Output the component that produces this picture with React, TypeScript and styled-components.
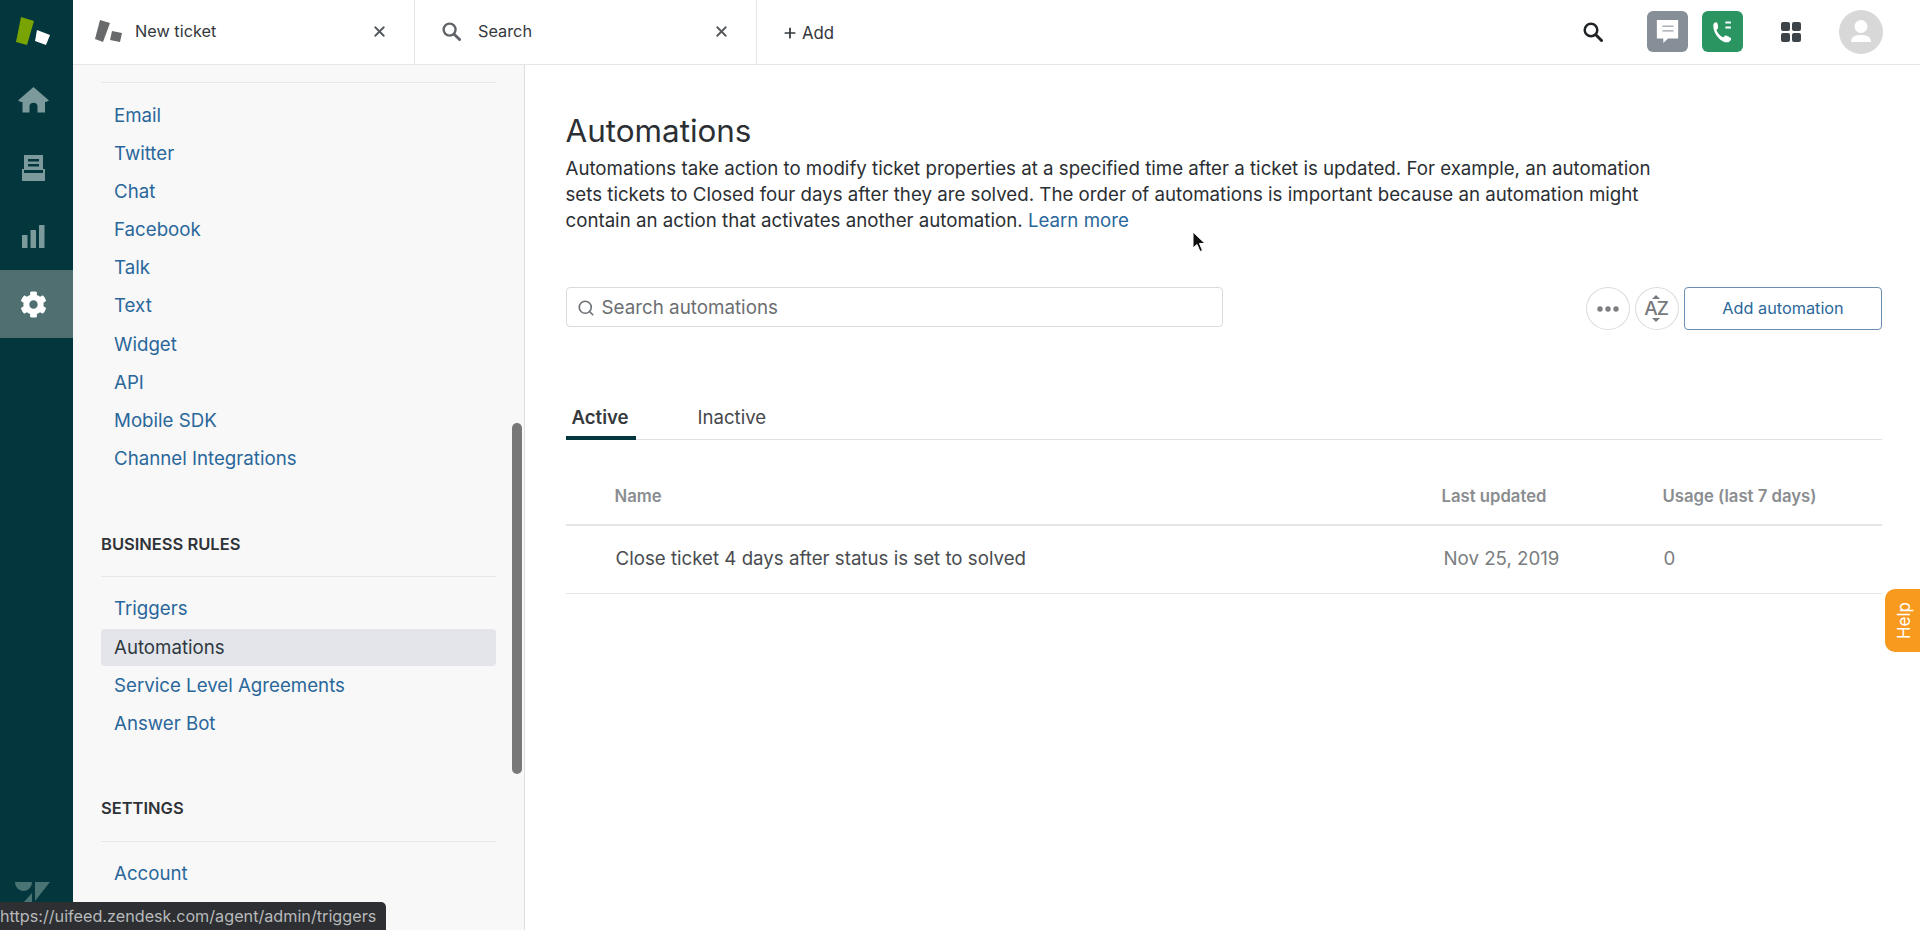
import styled, { createGlobalStyle } from "styled-components";
import { X, Search, Plus } from "lucide-react";
import { FaCog } from "react-icons/fa";

const channels = ["Email", "Twitter", "Chat", "Facebook", "Talk", "Text", "Widget", "API", "Mobile SDK", "Channel Integrations"];
const rules = ["Triggers", "Automations", "Service Level Agreements", "Answer Bot"];

const SearchGlyph = ({ size, color }: { size: number; color: string }) => (
  <svg width={size} height={size} viewBox="0 0 20 20" fill="none" stroke={color}>
    <circle cx="8" cy="8" r="6.300" strokeWidth="2.500" />
    <path d="M12.800 12.800 L18.500 18.500" strokeWidth="3" strokeLinecap="round" />
  </svg>
);

const App = () => (
  <Page>
    <GlobalStyle />
    <Rail>
      <RailLogo>
        <svg width="73" height="65" viewBox="0 0 73 65">
          <polygon points="21,17 34,21 27,45 16,42" fill="#78a300" />
          <polygon points="37,30 50,35 46,45 35,41" fill="#fff" />
        </svg>
      </RailLogo>
      <RailItem>
        <svg width="31" height="26" viewBox="0 0 31 26" fill="#7c9a9c">
          <path d="M15.5 0 L31 13.5 L28 15 L27 15 L27 25.5 L19.5 25.5 L19.5 19 C19.5 14.5 11.5 14.5 11.5 19 L11.5 25.5 L4.5 25.5 L4.5 15 L3 15 L0 13.5 Z" />
        </svg>
      </RailItem>
      <RailItem>
        <svg width="23" height="26" viewBox="0 0 23 26" fill="#7c9a9c">
          <path fillRule="evenodd" d="M2 0 H21 V15 H2 Z M6 4 V6.5 H17 V4 Z M6 9 V11.5 H17 V9 Z" />
          <path d="M0 14 H2 V18 H21 V14 H23 V26 H0 Z" />
        </svg>
      </RailItem>
      <RailItem>
        <svg width="23" height="23" viewBox="0 0 23 23" fill="#7c9a9c">
          <rect x="0" y="10" width="5.5" height="13" rx="0.5" />
          <rect x="8.5" y="5" width="5.5" height="18" rx="0.5" />
          <rect x="17" y="0" width="5.5" height="23" rx="0.5" />
        </svg>
      </RailItem>
      <RailItem $active>
        <FaCog size={27} color="#fff" />
      </RailItem>
      <RailMark>
        <svg width="36" height="30" viewBox="0 0 36 30" fill="#4a7474">
          <path d="M0 0 H17 C17 5 13 9 8.500 9 C4 9 0 5 0 0 Z" />
          <polygon points="17,11 17,30 0,30" />
          <polygon points="20,0 35,0 20,19" />
        </svg>
      </RailMark>
    </Rail>

    <Body>
      <TopBar>
        <Tab>
          <svg width="28" height="22" viewBox="0 0 28 22" fill="#68696b">
            <polygon points="6,0 16,3 9,22 1,19" />
            <polygon points="18,11 28,13 26,22 16,20" />
          </svg>
          <TabTitle>New ticket</TabTitle>
          <X size={17} strokeWidth={2.6} color="#55585c" />
        </Tab>
        <Tab $narrow>
          <SearchGlyph size={19} color="#606468" />
          <TabTitle $wide>Search</TabTitle>
          <X size={17} strokeWidth={2.6} color="#55585c" />
        </Tab>
        <AddTab>
          <Plus size={16} strokeWidth={2.6} />
          Add
        </AddTab>
        <TopActions>
          <SearchGlyph size={20} color="#1f2326" />
          <ChannelButton $color="#868e98">
            <svg width="25" height="25" viewBox="0 0 27 27">
              <path d="M2 1 H25 V21 H14 L9 26 V21 H2 Z" fill="#fff" />
              <rect x="8" y="7" width="12" height="1.6" fill="#a9afb6" />
              <rect x="8" y="12" width="12" height="1.6" fill="#a9afb6" />
            </svg>
          </ChannelButton>
          <ChannelButton $color="#2a9560">
            <svg width="27" height="27" viewBox="0 0 24 24" fill="#fff">
              <path d="M6.6 3.8c1.100.1 1.700 3.900 1.500 5-.1.700-1.500 1.300-1.500 2 1 2.600 3.200 4.900 5.700 6.400.8.200 1.500-1.500 2.300-1.600 1-.2 4.200 1.700 5 2.400.5 1-1.100 3.200-2.400 3.500C10.500 22.900 2.700 12.500 4 5.300c.3-.8 1.700-1.600 2.600-1.500z" />
              <rect x="14.500" y="3" width="5" height="1.900" rx="0.5" />
              <rect x="14.500" y="7.500" width="5" height="1.900" rx="0.5" />
            </svg>
          </ChannelButton>
          <AppsGrid>
            <i /><i /><i /><i />
          </AppsGrid>
          <Avatar>
            <svg width="44" height="44" viewBox="0 0 44 44" fill="#fff">
              <circle cx="22" cy="16.500" r="6.500" />
              <path d="M12 32 C12 26 17 25 22 25 C27 25 32 26 32 32 Z" />
            </svg>
          </Avatar>
        </TopActions>
      </TopBar>

      <Columns>
        <Sidebar>
          <Divider />
          <NavList>
            {channels.map((name) => (
              <NavItem key={name}>{name}</NavItem>
            ))}
          </NavList>
          <SectionTitle>BUSINESS RULES</SectionTitle>
          <Divider />
          <NavList>
            {rules.map((name) => (
              <NavItem key={name} $selected={name === "Automations"}>{name}</NavItem>
            ))}
          </NavList>
          <SectionTitle>SETTINGS</SectionTitle>
          <Divider />
          <NavList>
            <NavItem>Account</NavItem>
          </NavList>
          <ScrollThumb />
        </Sidebar>

        <Main>
          <Title>Automations</Title>
          <Intro>
            Automations take action to modify ticket properties at a specified time after a ticket is updated. For example, an automation sets tickets to Closed four days after they are solved. The order of automations is important because an automation might contain an action that activates another automation. <IntroLink>Learn more</IntroLink>
          </Intro>

          <Toolbar>
            <SearchBox>
              <Search size={18} strokeWidth={2.2} color="#6f7377" />
              <span>Search automations</span>
            </SearchBox>
            <ToolButtons>
              <RoundButton>
                <svg width="22" height="6" viewBox="0 0 22 6" fill="#7d7f82">
                  <circle cx="3" cy="3" r="2.700" />
                  <circle cx="11" cy="3" r="2.700" />
                  <circle cx="19" cy="3" r="2.700" />
                </svg>
              </RoundButton>
              <RoundButton>
                <SortLabel>AZ</SortLabel>
              </RoundButton>
              <AddButton>Add automation</AddButton>
            </ToolButtons>
          </Toolbar>

          <TabRow>
            <ListTab $active>Active</ListTab>
            <ListTab>Inactive</ListTab>
          </TabRow>

          <HeadRow>
            <span>Name</span>
            <span>Last updated</span>
            <span>Usage (last 7 days)</span>
          </HeadRow>
          <DataRow>
            <span>Close ticket 4 days after status is set to solved</span>
            <DataMuted>Nov 25, 2019</DataMuted>
            <DataMuted>0</DataMuted>
          </DataRow>
        </Main>
      </Columns>
    </Body>

    <HelpTab>
      <span>Help</span>
    </HelpTab>
    <Pointer>
      <svg width="14" height="22" viewBox="0 0 14 22">
        <path d="M1 1 L1 17 L5 13.500 L8 20.500 L10.500 19.500 L7.500 12.500 L13 12.500 Z" fill="#111" stroke="#fff" strokeWidth="1" />
      </svg>
    </Pointer>
    <StatusLink>https://uifeed.zendesk.com/agent/admin/triggers</StatusLink>
  </Page>
);

export default App;

// Styled Components

const GlobalStyle = createGlobalStyle`
  html, body {
    margin: 0;
    padding: 0;
    height: 100%;
    overflow: hidden;
  }
  body {
    font-family: Inter, "Liberation Sans", sans-serif;
    color: #2f3941;
  }
`;

const Page = styled.div`
  position: relative;
  display: flex;
  width: 1920px;
  height: 930px;
  overflow: hidden;
  background: #fff;
`;

const Rail = styled.nav`
  display: flex;
  flex-direction: column;
  flex: 0 0 73px;
  background: #03363d;
`;

const RailLogo = styled.div`
  height: 65px;
  margin-bottom: 1px;
  svg {
    display: block;
  }
`;

const RailItem = styled.div<{ $active?: boolean }>`
  display: flex;
  align-items: center;
  justify-content: center;
  height: 68px;
  padding-right: 7px;
  background: ${(p) => (p.$active ? "#4f6f71" : "transparent")};
`;

const RailMark = styled.div`
  margin-top: auto;
  height: 48px;
  padding-left: 15px;
`;

const Body = styled.div`
  display: flex;
  flex-direction: column;
  flex: 1;
  min-width: 0;
`;

const TopBar = styled.header`
  display: flex;
  align-items: stretch;
  height: 64px;
  border-bottom: 1px solid #e4e6e8;
  background: #fff;
`;

const Tab = styled.div<{ $narrow?: boolean }>`
  display: flex;
  align-items: center;
  width: 342px;
  box-sizing: border-box;
  padding: 0 26px 2px ${(p) => (p.$narrow ? "27px" : "21px")};
  border-right: 1px solid #e4e6e8;
`;

const TabTitle = styled.span<{ $wide?: boolean }>`
  flex: 1;
  margin-left: ${(p) => (p.$wide ? "17px" : "13px")};
  font-size: 16.300px;
  color: #33383c;
`;

const AddTab = styled.div`
  display: flex;
  align-items: center;
  gap: 4px;
  padding: 1px 0 0 25px;
  font-size: 16.800px;
  color: #33383c;
`;

const TopActions = styled.div`
  display: flex;
  align-items: center;
  gap: 14px;
  margin-left: auto;
  padding-right: 37.500px;
`;

const ChannelButton = styled.div<{ $color: string }>`
  display: flex;
  align-items: center;
  justify-content: center;
  width: 41px;
  height: 41px;
  margin-top: -2px;
  border-radius: 6px;
  background: ${(p) => p.$color};
  &:first-of-type {
    margin-left: 30px;
  }
`;

const AppsGrid = styled.div`
  display: grid;
  grid-template-columns: 9px 9px;
  gap: 2px;
  margin: 0 24px;
  i {
    display: block;
    height: 9px;
    border-radius: 2px;
    background: #3d4449;
  }
`;

const Avatar = styled.div`
  width: 44px;
  height: 44px;
  border-radius: 50%;
  background: #d8d8d8;
`;

const Columns = styled.div`
  display: flex;
  flex: 1;
  min-height: 0;
`;

const Sidebar = styled.aside`
  position: relative;
  flex: 0 0 452px;
  box-sizing: border-box;
  padding: 17px 28px 0 28px;
  overflow: hidden;
  background: #f8f8f8;
  border-right: 1px solid #dcdee0;
`;

const Divider = styled.div`
  height: 1px;
  background: #e6e8ea;
`;

const NavList = styled.div`
  display: flex;
  flex-direction: column;
  gap: 1.200px;
  margin-top: 13.500px;
`;

const NavItem = styled.div<{ $selected?: boolean }>`
  height: 37px;
  line-height: 37px;
  padding-left: 13px;
  border-radius: 4px;
  font-size: 18.700px;
  color: ${(p) => (p.$selected ? "#2f3941" : "#2a679b")};
  background: ${(p) => (p.$selected ? "#e4e5ea" : "transparent")};
`;

const SectionTitle = styled.div`
  margin-top: 48.500px;
  height: 50.200px;
  line-height: 36px;
  font-size: 16.500px;
  font-weight: 600;
  color: #2f3337;
`;

const ScrollThumb = styled.div`
  position: absolute;
  top: 358px;
  right: 2px;
  width: 10px;
  height: 351px;
  border-radius: 5px;
  background: #787878;
`;

const Main = styled.main`
  flex: 1;
  min-width: 0;
  padding: 46px 38px 0 40.500px;
`;

const Title = styled.h1`
  margin: 0 0 4.500px;
  font-size: 31.400px;
  line-height: 40px;
  font-weight: 400;
  color: #2b2f33;
`;

const Intro = styled.p`
  width: 1105px;
  margin: 0 0 53.500px;
  font-size: 18.700px;
  line-height: 26px;
  color: #2b2f33;
`;

const IntroLink = styled.span`
  color: #2a679b;
`;

const Toolbar = styled.div`
  display: flex;
  align-items: flex-start;
  justify-content: space-between;
`;

const SearchBox = styled.div`
  display: flex;
  align-items: center;
  gap: 7px;
  width: 657px;
  height: 40px;
  box-sizing: border-box;
  padding: 1px 0 0 10px;
  border: 1.500px solid #d8dcde;
  border-radius: 4px;
  font-size: 18.800px;
  color: #6b6e71;
`;

const ToolButtons = styled.div`
  display: flex;
  gap: 5px;
`;

const RoundButton = styled.div`
  display: flex;
  align-items: center;
  justify-content: center;
  width: 44px;
  height: 43px;
  box-sizing: border-box;
  border: 1.500px solid #d8dcde;
  border-radius: 50%;
  background: #fff;
`;

const SortLabel = styled.span`
  position: relative;
  margin-right: 2px;
  font-size: 19px;
  font-weight: 500;
  letter-spacing: -1px;
  color: #77797c;
  &::before,
  &::after {
    content: "";
    position: absolute;
    left: 50%;
    margin-left: -4px;
    border-left: 4px solid transparent;
    border-right: 4px solid transparent;
  }
  &::before {
    top: -2px;
    border-bottom: 4px solid #77797c;
  }
  &::after {
    bottom: -2px;
    border-top: 4px solid #77797c;
  }
`;

const AddButton = styled.div`
  display: flex;
  align-items: center;
  justify-content: center;
  width: 198px;
  height: 43px;
  box-sizing: border-box;
  padding-bottom: 2px;
  border: 1.500px solid #6b8fb0;
  border-radius: 4px;
  font-size: 16.300px;
  color: #2a679b;
`;

const TabRow = styled.div`
  display: flex;
  gap: 56px;
  margin-top: 34px;
  height: 75.500px;
  box-sizing: border-box;
  align-items: flex-end;
  border-bottom: 1.500px solid #dfe1e3;
`;

const ListTab = styled.div<{ $active?: boolean }>`
  min-width: 70px;
  box-sizing: border-box;
  padding: 0 6px 7px;
  margin-bottom: -1.500px;
  font-size: 18.600px;
  line-height: 24px;
  font-weight: ${(p) => (p.$active ? 600 : 400)};
  color: ${(p) => (p.$active ? "#36393c" : "#45484b")};
  border-bottom: 4px solid ${(p) => (p.$active ? "#03363d" : "transparent")};
`;

const HeadRow = styled.div`
  display: grid;
  grid-template-columns: 827px 221px 1fr;
  align-items: center;
  height: 86px;
  box-sizing: border-box;
  padding: 28px 0 0 49px;
  border-bottom: 2px solid #e4e6e8;
  font-size: 16.700px;
  font-weight: 600;
  color: #8a8d90;
`;

const DataRow = styled.div`
  display: grid;
  grid-template-columns: 828px 220px 1fr;
  align-items: center;
  height: 68px;
  box-sizing: border-box;
  padding: 0 0 1px 50px;
  border-bottom: 1.500px solid #e4e6e8;
  font-size: 18.700px;
  color: #494c4f;
`;

const DataMuted = styled.span`
  color: #7a7d80;
`;

const HelpTab = styled.div`
  position: absolute;
  top: 589px;
  right: 0;
  display: flex;
  align-items: center;
  justify-content: center;
  width: 35px;
  height: 63px;
  padding-left: 2px;
  box-sizing: border-box;
  border-radius: 10px 0 0 10px;
  background: #f79a1e;
  color: #fff;
  font-size: 17px;
  span {
    writing-mode: vertical-rl;
    transform: rotate(180deg);
  }
`;

const Pointer = styled.div`
  position: absolute;
  top: 231px;
  left: 1192px;
  line-height: 0;
`;

const StatusLink = styled.div`
  position: absolute;
  left: 0;
  bottom: 0;
  display: flex;
  align-items: center;
  height: 28px;
  padding: 0 10px 0 0;
  border-radius: 0 5px 0 0;
  background: #2d2f32;
  color: #b8babc;
  font-size: 16.200px;
  white-space: nowrap;
`;
